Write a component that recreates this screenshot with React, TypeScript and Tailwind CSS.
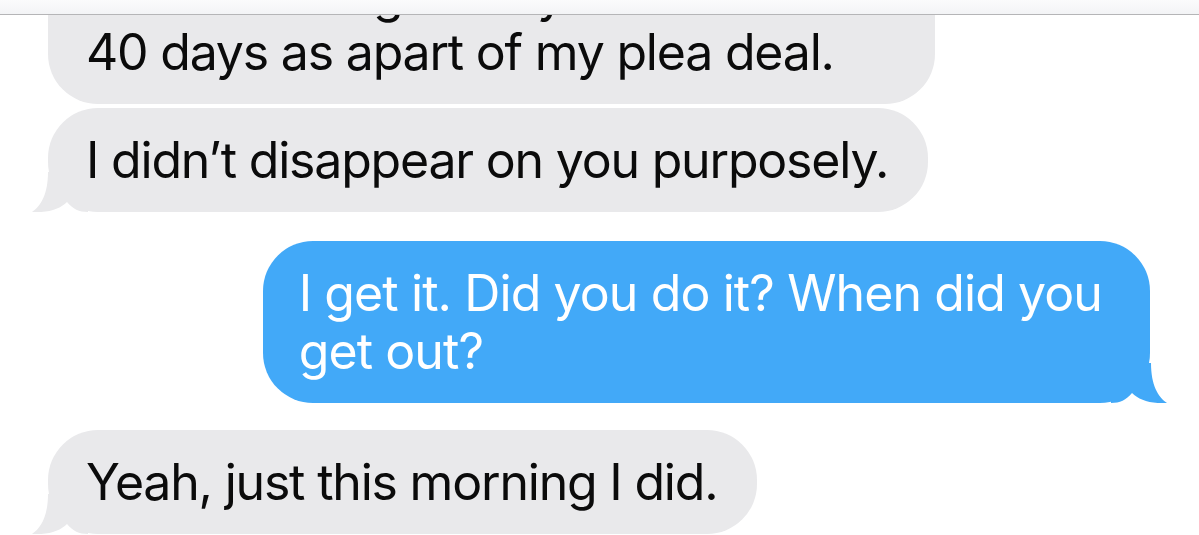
const font = { fontFamily: "Inter, 'Noto Sans', sans-serif" };

const Tail = ({ color, flip }: { color: string; flip?: boolean }) => (
  <svg
    width="56"
    height="40"
    viewBox="0 0 56 40"
    className={
      flip
        ? "pointer-events-none absolute -right-[17px] bottom-0 -scale-x-100"
        : "pointer-events-none absolute -left-[16px] bottom-0"
    }
  >
    <path
      d="M0 40 C9 34 16 22 16 0 L56 0 L56 40 C47 40 41 37 35 30 C28 37 16 41 0 40 Z"
      fill={color}
    />
  </svg>
);

const Incoming = ({
  children,
  tail,
}: {
  children: React.ReactNode;
  tail?: boolean;
}) => (
  <div className="relative w-fit rounded-[50px] bg-[#e9e9eb] py-[23px] pl-[38px] pr-[40px] text-[50px] leading-[58px] tracking-[-1.2px] text-[#0b0b0b]">
    {tail && <Tail color="#e9e9eb" />}
    <span className="relative">{children}</span>
  </div>
);

export default function App() {
  return (
    <div
      className="relative h-[535px] w-[1199px] overflow-hidden bg-white"
      style={font}
    >
      <div className="relative z-10 h-[15px] border-b border-[#b5b5b7] bg-gradient-to-b from-[#fbfbfc] to-[#f3f4f6]" />

      <div className="-mt-[73px] flex flex-col pl-[48px] pr-[49px]">
        <Incoming>
          Well I had to go away for the full last
          <br />
          40 days as apart of my plea deal.
        </Incoming>

        <div className="mt-[4px]">
          <Incoming tail>I didn’t disappear on you purposely.</Incoming>
        </div>

        <div className="relative mt-[29px] w-fit self-end rounded-[50px] bg-[#42a9f8] py-[23px] pl-[36px] pr-[48px] text-[50px] leading-[58px] tracking-[-0.9px] text-white">
          <Tail color="#42a9f8" flip />
          <span className="relative">
            I get it. Did you do it? When did you
            <br />
            get out?
          </span>
        </div>

        <div className="mt-[27px]">
          <Incoming tail>Yeah, just this morning I did.</Incoming>
        </div>
      </div>
    </div>
  );
}
